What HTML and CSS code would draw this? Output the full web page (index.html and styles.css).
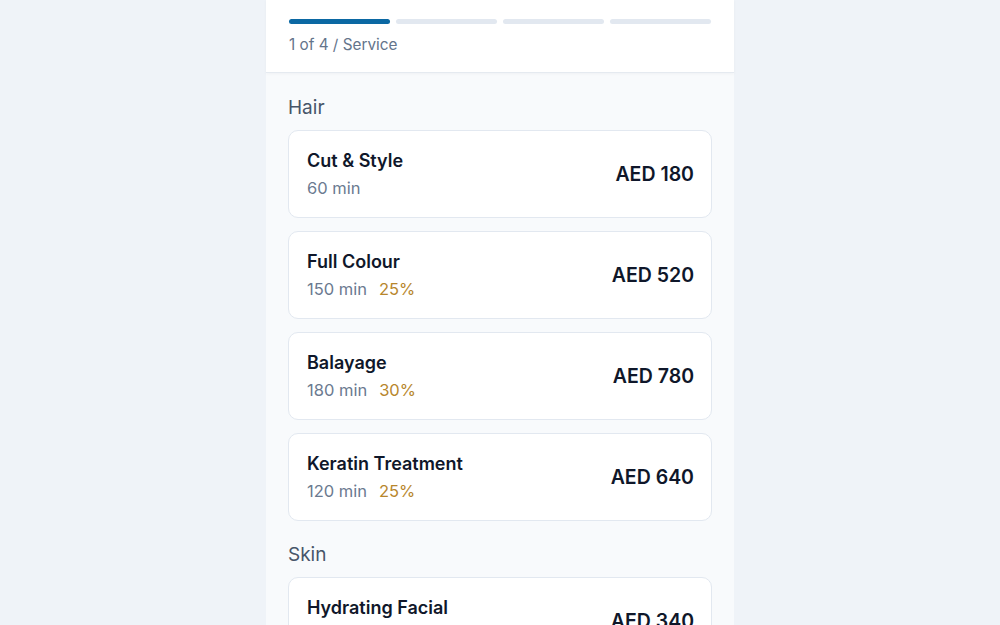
FILE: index.html
```html
<!DOCTYPE html>
<html>
<head>
    <title>Book a Service</title>
    <link rel="stylesheet" href="styles.css">
</head>
<body>
    <div class="panel">
        <div class="header">
            <div class="steps">
                <span class="step active"></span>
                <span class="step"></span>
                <span class="step"></span>
                <span class="step"></span>
            </div>
            <div class="step-label">1 of 4 / Service</div>
        </div>

        <div class="content">
            <div class="section">
                <h2 class="section-title">Hair</h2>
                <div class="service">
                    <div class="service-info">
                        <div class="service-name">Cut &amp; Style</div>
                        <div class="service-meta"><span>60 min</span></div>
                    </div>
                    <div class="service-price">AED 180</div>
                </div>
                <div class="service">
                    <div class="service-info">
                        <div class="service-name">Full Colour</div>
                        <div class="service-meta"><span>150 min</span><span class="deposit">25%</span></div>
                    </div>
                    <div class="service-price">AED 520</div>
                </div>
                <div class="service">
                    <div class="service-info">
                        <div class="service-name">Balayage</div>
                        <div class="service-meta"><span>180 min</span><span class="deposit">30%</span></div>
                    </div>
                    <div class="service-price">AED 780</div>
                </div>
                <div class="service">
                    <div class="service-info">
                        <div class="service-name">Keratin Treatment</div>
                        <div class="service-meta"><span>120 min</span><span class="deposit">25%</span></div>
                    </div>
                    <div class="service-price">AED 640</div>
                </div>
            </div>

            <div class="section">
                <h2 class="section-title">Skin</h2>
                <div class="service">
                    <div class="service-info">
                        <div class="service-name">Hydrating Facial</div>
                        <div class="service-meta"><span>75 min</span></div>
                    </div>
                    <div class="service-price">AED 340</div>
                </div>
            </div>
        </div>
    </div>
</body>
</html>
```

FILE: styles.css
```css
body {
    font-family: Inter, "Noto Sans", sans-serif;
    margin: 0;
    padding: 0;
    background-color: #eff3f8;
    color: #0f172a;
    height: 625px;
    overflow: hidden;
}

.panel {
    width: 468px;
    margin: 0 auto;
    background-color: #f8fafc;
    min-height: 625px;
}

.header {
    background-color: #fff;
    padding: 19px 23px 16px;
    border-bottom: 1px solid #e5eaf0;
    box-shadow: 0 1px 3px rgba(15, 23, 42, 0.04);
}

.steps {
    display: flex;
    gap: 6px;
}

.step {
    flex: 1;
    height: 5px;
    border-radius: 3px;
    background-color: #e2e8f0;
}

.step.active {
    background-color: #0b68a3;
}

.step-label {
    margin-top: 10px;
    font-size: 15.3px;
    line-height: 22px;
    color: #64748b;
}

.content {
    padding: 22px 22px 20px;
}

.section + .section {
    margin-top: 21px;
}

.section-title {
    margin: 0 0 9px;
    font-size: 19px;
    line-height: 26px;
    font-weight: 400;
    color: #475569;
}

.service {
    display: flex;
    align-items: center;
    justify-content: space-between;
    background-color: #fff;
    border: 1px solid #e2e8f0;
    border-radius: 10px;
    padding: 18px 17px 18px 18px;
    margin-bottom: 13px;
}

.service-name {
    font-size: 18px;
    line-height: 24px;
    font-weight: 600;
    color: #0f172a;
}

.service-meta {
    margin-top: 4px;
    font-size: 16.5px;
    line-height: 22px;
    color: #6b7a90;
    display: flex;
    gap: 12px;
}

.deposit {
    color: #b7862c;
}

.service-price {
    font-size: 19.5px;
    font-weight: 600;
    color: #0f172a;
}
```
